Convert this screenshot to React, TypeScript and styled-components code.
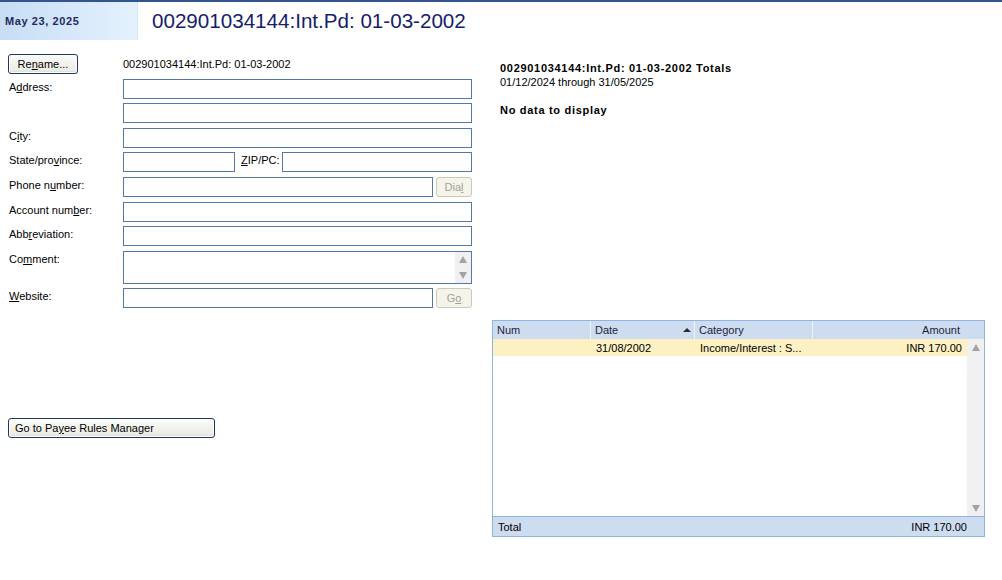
import { FC } from 'react';
import styled, { createGlobalStyle } from 'styled-components';

const GlobalStyle = createGlobalStyle`
  html, body {
    margin: 0;
    padding: 0;
    background: #ffffff;
  }
  body {
    font-family: "Liberation Sans", Arial, sans-serif;
    font-size: 11px;
    color: #000000;
  }
  u {
    text-decoration: underline;
    text-underline-offset: 1px;
  }
`;

const App: FC = () => {
  return (
    <>
      <GlobalStyle />
      <Page>
        <TopBar>
          <DatePanel>May 23, 2025</DatePanel>
          <Title>002901034144:Int.Pd: 01-03-2002</Title>
        </TopBar>
        <Main>
          <LeftCol>
            <Form>
              <Cell>
                <Button>
                  Re<u>n</u>ame...
                </Button>
              </Cell>
              <NameText>002901034144:Int.Pd: 01-03-2002</NameText>

              <Label>
                A<u>d</u>dress:
              </Label>
              <Input />
              <span />
              <Input />

              <Label>
                C<u>i</u>ty:
              </Label>
              <Input />

              <Label>
                State/pro<u>v</u>ince:
              </Label>
              <InlineRow>
                <Input $width={112} />
                <InlineLabel>
                  <u>Z</u>IP/PC:
                </InlineLabel>
                <Input $grow />
              </InlineRow>

              <Label>
                Phone n<u>u</u>mber:
              </Label>
              <InlineRow>
                <Input $grow />
                <SmallButton>
                  Dia<u>l</u>
                </SmallButton>
              </InlineRow>

              <Label>
                Account num<u>b</u>er:
              </Label>
              <Input />

              <Label>
                Abb<u>r</u>eviation:
              </Label>
              <Input />

              <Label>
                Co<u>m</u>ment:
              </Label>
              <TextArea>
                <ScrollStrip>
                  <Arrow $up />
                  <Arrow />
                </ScrollStrip>
              </TextArea>

              <Label>
                <u>W</u>ebsite:
              </Label>
              <InlineRow>
                <Input $grow />
                <SmallButton>
                  G<u>o</u>
                </SmallButton>
              </InlineRow>
            </Form>
            <RulesButton>
              Go to Pa<u>y</u>ee Rules Manager
            </RulesButton>
          </LeftCol>

          <RightCol>
            <Totals>
              <Bold>002901034144:Int.Pd: 01-03-2002 Totals</Bold>
              <div>01/12/2024 through 31/05/2025</div>
              <Gap />
              <Bold>No data to display</Bold>
            </Totals>

            <Grid>
              <HeaderRow>
                <HeadCell $w={98}>Num</HeadCell>
                <HeadCell $w={104}>
                  Date
                  <SortMark />
                </HeadCell>
                <HeadCell $w={118}>Category</HeadCell>
                <HeadCell $grow $right>
                  Amount
                </HeadCell>
              </HeaderRow>
              <GridBody>
                <Rows>
                  <DataRow>
                    <DataCell $w={98} />
                    <DataCell $w={104}>31/08/2002</DataCell>
                    <DataCell $w={118}>Income/Interest : S...</DataCell>
                    <DataCell $grow $right>
                      INR 170.00
                    </DataCell>
                  </DataRow>
                </Rows>
                <VScroll>
                  <Arrow $up />
                  <Arrow />
                </VScroll>
              </GridBody>
              <FooterRow>
                <span>Total</span>
                <span>INR 170.00</span>
              </FooterRow>
            </Grid>
          </RightCol>
        </Main>
      </Page>
    </>
  );
};

// Styles
const Page = styled.div`
  width: 1002px;
  height: 580px;
  overflow: hidden;
`;

const TopBar = styled.div`
  display: flex;
  height: 38px;
  border-top: 2px solid #34548f;
`;

const DatePanel = styled.div`
  width: 132px;
  padding-left: 5px;
  display: flex;
  align-items: center;
  background: linear-gradient(to right, #c7ddf5, #e4f1fd);
  border-right: 1px solid #d8e6f4;
  color: #1f2a5e;
  font-weight: bold;
  letter-spacing: 0.6px;
`;

const Title = styled.div`
  display: flex;
  align-items: center;
  padding-left: 14px;
  font-size: 20.6px;
  color: #161d6c;
`;

const Main = styled.div`
  display: flex;
`;

const LeftCol = styled.div`
  width: 484px;
  padding: 14px 0 0 8px;
  display: flex;
  flex-direction: column;
`;

const Form = styled.div`
  display: grid;
  grid-template-columns: 115px 349px;
  row-gap: 4.6px;
  align-items: center;
`;

const Cell = styled.div`
  display: flex;
`;

const NameText = styled.div`
  line-height: 18px;
`;

const Label = styled.div`
  padding-left: 1px;
  line-height: 16px;
  align-self: start;
`;

const InlineRow = styled.div`
  display: flex;
  align-items: center;
`;

const InlineLabel = styled.div`
  width: 47px;
  padding-left: 6px;
  box-sizing: border-box;
  white-space: nowrap;
  align-self: flex-start;
  line-height: 16px;
`;

const Input = styled.div<{ $width?: number; $grow?: boolean }>`
  box-sizing: border-box;
  height: 20px;
  border: 1px solid #5379aa;
  background: #ffffff;
  ${(p) => (p.$width ? `width: ${p.$width}px;` : '')}
  ${(p) => (p.$grow ? 'flex: 1;' : '')}
`;

const TextArea = styled.div`
  box-sizing: border-box;
  height: 33px;
  border: 1px solid #5379aa;
  display: flex;
  justify-content: flex-end;
`;

const ScrollStrip = styled.div`
  width: 16px;
  background: #f0f0f0;
  display: flex;
  flex-direction: column;
  justify-content: space-between;
  align-items: center;
  padding: 4px 0;
`;

const Arrow = styled.div<{ $up?: boolean }>`
  width: 0;
  height: 0;
  border-left: 4px solid transparent;
  border-right: 4px solid transparent;
  ${(p) =>
    p.$up
      ? 'border-bottom: 7px solid #a3a3a3;'
      : 'border-top: 7px solid #a3a3a3;'}
`;

const Button = styled.button`
  box-sizing: border-box;
  width: 70px;
  height: 20px;
  padding: 0;
  border: 1px solid #1d3668;
  border-radius: 3px;
  background: linear-gradient(to bottom, #fbfbf8, #ecebe4 85%, #d8d6cc);
  box-shadow: inset 0 0 0 1px #ffffff;
  font-family: inherit;
  font-size: 11px;
  color: #000000;
`;

const SmallButton = styled.button`
  box-sizing: border-box;
  width: 36px;
  height: 20px;
  margin-left: 3px;
  padding: 0;
  border: 1px solid #cac8bb;
  border-radius: 3px;
  background: #f5f4ea;
  font-family: inherit;
  font-size: 11px;
  color: #a3a192;
`;

const RulesButton = styled(Button)`
  width: 207px;
  margin-top: 110px;
  text-align: left;
  padding-left: 6px;
`;

const RightCol = styled.div`
  flex: 1;
  padding: 21px 17px 0 0;
  display: flex;
  flex-direction: column;
`;

const Totals = styled.div`
  padding-left: 8px;
  line-height: 14px;
`;

const Bold = styled.div`
  font-weight: bold;
  letter-spacing: 0.7px;
`;

const Gap = styled.div`
  height: 14px;
`;

const Grid = styled.div`
  margin-top: 203px;
  height: 217px;
  box-sizing: border-box;
  border: 1px solid #8fb3e3;
  display: flex;
  flex-direction: column;
`;

const HeaderRow = styled.div`
  display: flex;
  height: 18px;
  background: #cedcf0;
  color: #1a2440;
`;

const HeadCell = styled.div<{ $w?: number; $grow?: boolean; $right?: boolean }>`
  position: relative;
  box-sizing: border-box;
  ${(p) => (p.$w ? `width: ${p.$w}px;` : '')}
  ${(p) => (p.$grow ? 'flex: 1;' : '')}
  display: flex;
  align-items: center;
  justify-content: ${(p) => (p.$right ? 'flex-end' : 'flex-start')};
  padding: ${(p) => (p.$right ? '0 24px 0 0' : '0 0 0 4px')};
  border-right: ${(p) => (p.$grow ? 'none' : '1px solid #eef3fa')};
`;

const SortMark = styled.span`
  position: absolute;
  right: 3px;
  top: 7px;
  width: 0;
  height: 0;
  border-left: 4px solid transparent;
  border-right: 4px solid transparent;
  border-bottom: 4px solid #2a2a2a;
`;

const GridBody = styled.div`
  flex: 1;
  display: flex;
  background: #ffffff;
`;

const Rows = styled.div`
  flex: 1;
`;

const DataRow = styled.div`
  display: flex;
  height: 17px;
  background: #fdf1c3;
`;

const DataCell = styled.div<{ $w?: number; $grow?: boolean; $right?: boolean }>`
  box-sizing: border-box;
  ${(p) => (p.$w ? `width: ${p.$w}px;` : '')}
  ${(p) => (p.$grow ? 'flex: 1;' : '')}
  display: flex;
  align-items: center;
  justify-content: ${(p) => (p.$right ? 'flex-end' : 'flex-start')};
  padding: ${(p) => (p.$right ? '0 5px 0 0' : '0 0 0 5px')};
`;

const VScroll = styled.div`
  width: 17px;
  background: #f0f0f0;
  display: flex;
  flex-direction: column;
  justify-content: space-between;
  align-items: center;
  padding: 5px 0 4px;
`;

const FooterRow = styled.div`
  height: 19px;
  border-top: 1px solid #8fb3e3;
  background: #cedcf0;
  display: flex;
  align-items: center;
  justify-content: space-between;
  padding: 0 17px 0 5px;
`;

export default App;
